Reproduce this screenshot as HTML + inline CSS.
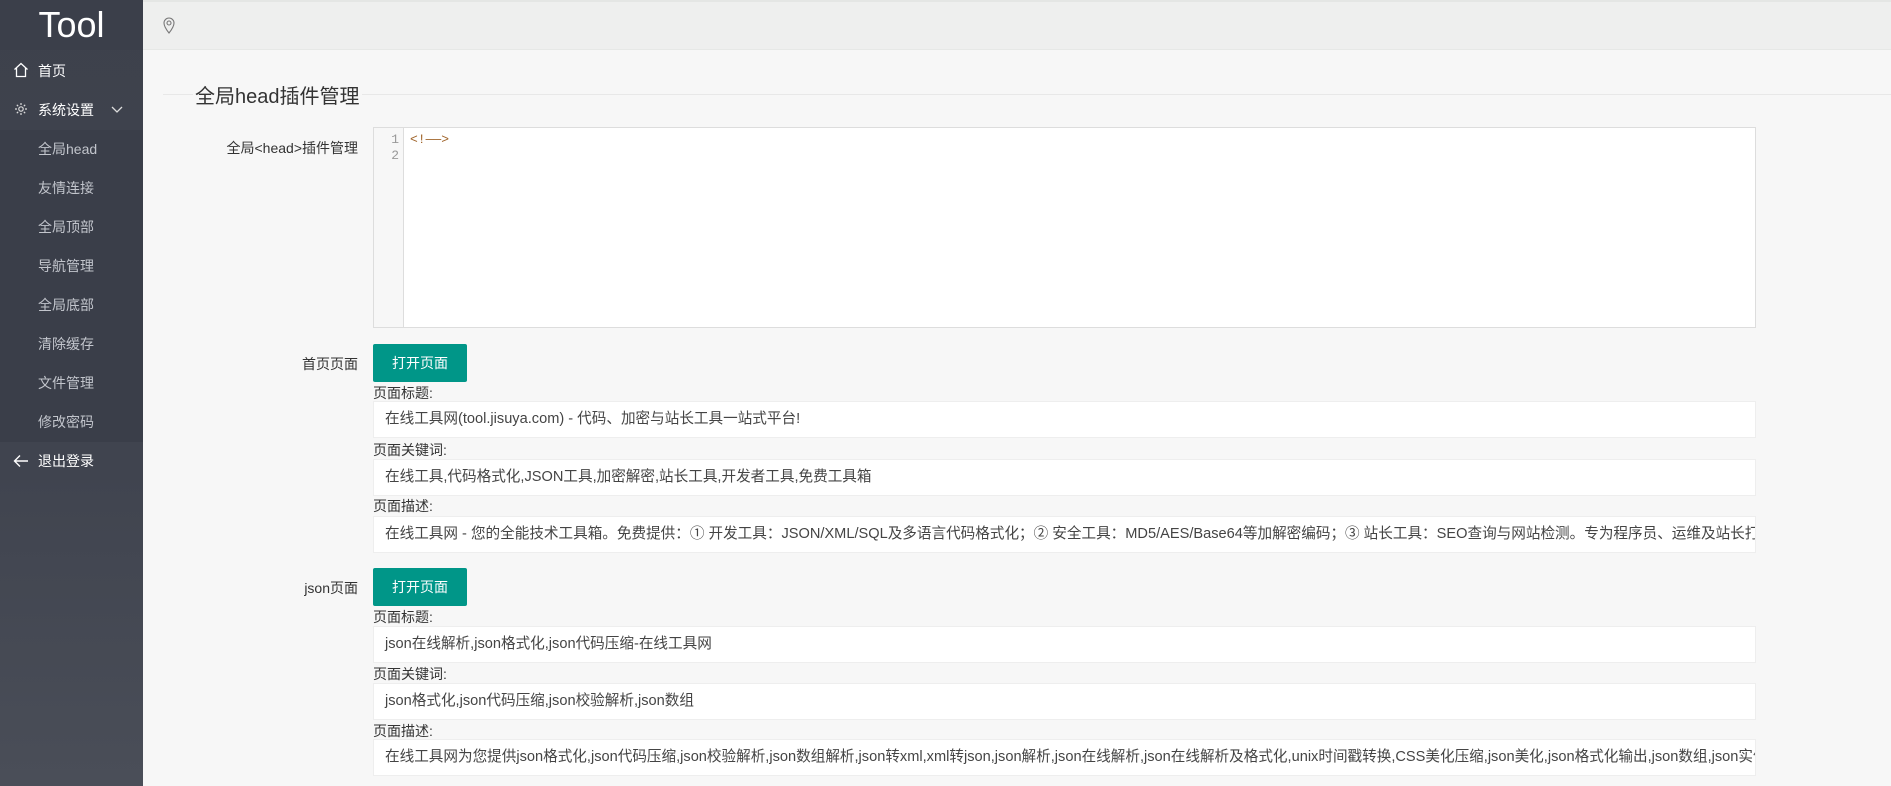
<!DOCTYPE html>
<html><head><meta charset="utf-8"><style>
*{margin:0;padding:0;box-sizing:border-box}
body{width:1891px;height:786px;overflow:hidden;background:#f7f7f7;font-family:"Liberation Sans","Noto Sans CJK SC",sans-serif;font-size:14px;color:#333;position:relative}
.side{position:absolute;left:0;top:0;width:143px;height:786px;background:linear-gradient(#3d414c,#40444f 60%,#4a4e58)}
.logo{position:absolute;left:0;top:0;width:143px;height:50px;text-align:center;color:#fff;font-size:36px;line-height:50px;background:#3b3f4a}
.sub{position:absolute;left:0;top:130px;width:143px;height:312px;background:#3a3e49}
.mi{position:absolute;left:38px;color:#fff;font-size:14px;line-height:20px}
.si{position:absolute;left:38px;color:#c2c5cc;font-size:14px;line-height:20px}
.hdr{position:absolute;left:143px;top:0;right:0;height:50px;background:#eeefee;border-top:2px solid #e4e6e4;border-bottom:1px solid #e6e8e6}
.title{position:absolute;left:193px;top:80px;font-size:20px;color:#333;background:#f7f7f7;padding:0 2px}
.line{position:absolute;left:163px;right:0;top:94px;height:1px;background:#e8e8e8}
.lbl{position:absolute;right:1533px;font-size:14px;color:#333;white-space:nowrap}
.cap{position:absolute;left:373px;font-size:14px;color:#333}
.inp{position:absolute;left:373px;width:1383px;height:37px;background:#fff;border:1px solid #eee;padding-left:11px;line-height:35px;font-size:14.6px;color:#444;white-space:nowrap;overflow:hidden}
.btn{position:absolute;left:373px;width:94px;height:38px;background:#009688;color:#fff;border-radius:2px;text-align:center;line-height:38px;font-size:14px}
.ed{position:absolute;left:373px;top:127px;width:1383px;height:201px;background:#fff;border:1px solid #ddd}
.gut{position:absolute;left:0;top:0;width:30px;height:199px;background:#f7f7f7;border-right:1px solid #ddd;font-family:"Liberation Mono",monospace;font-size:13px;color:#999;text-align:right;padding:4px 4px 0 0;line-height:16px}
</style></head><body>
<div class="side">
<div class="logo">Tool</div>
<div class="sub"></div>
<svg style="position:absolute;left:13px;top:62px" width="16" height="16" viewBox="0 0 16 16" fill="none" stroke="#fff" stroke-width="1.3"><path d="M1.5 7.5L8 1.5l6.5 6M3.5 6v8.5h9V6"/></svg>
<div class="mi" style="top:61px">首页</div>
<svg style="position:absolute;left:14px;top:102px" width="14" height="14" viewBox="0 0 14 14" fill="none" stroke="#ddd" stroke-width="1.2"><circle cx="7" cy="7" r="2.2"/><path d="M7 1v2M7 11v2M1 7h2M11 7h2M2.8 2.8l1.4 1.4M9.8 9.8l1.4 1.4M2.8 11.2l1.4-1.4M9.8 4.2l1.4-1.4"/></svg>
<div class="mi" style="top:100px">系统设置</div>
<svg style="position:absolute;left:111px;top:106px" width="12" height="8" viewBox="0 0 12 8" fill="none" stroke="#ddd" stroke-width="1.3"><path d="M1 1l5 5 5-5"/></svg>
<div class="si" style="top:139px">全局head</div>
<div class="si" style="top:178px">友情连接</div>
<div class="si" style="top:217px">全局顶部</div>
<div class="si" style="top:256px">导航管理</div>
<div class="si" style="top:295px">全局底部</div>
<div class="si" style="top:334px">清除缓存</div>
<div class="si" style="top:373px">文件管理</div>
<div class="si" style="top:412px">修改密码</div>
<svg style="position:absolute;left:13px;top:454px" width="16" height="14" viewBox="0 0 16 14" fill="none" stroke="#fff" stroke-width="1.4"><path d="M15 7H2M7 1.5L1.5 7 7 12.5"/></svg>
<div class="mi" style="top:451px">退出登录</div>
</div>
<div class="hdr"><svg style="position:absolute;left:20px;top:15px" width="12" height="17" viewBox="0 0 12 17" fill="none" stroke="#777" stroke-width="1.1"><path d="M6 16C2 11 1 8.5 1 6a5 5 0 0110 0c0 2.5-1 5-5 10z"/><circle cx="6" cy="6" r="2"/></svg></div>
<div class="line"></div>
<div class="title">全局head插件管理</div>
<div class="lbl" style="top:138px">全局&lt;head&gt;插件管理</div>
<div class="ed"><div class="gut">1<br>2</div><div style="position:absolute;left:36px;top:4px;font-family:'Liberation Mono',monospace;font-size:13px;color:#a0642a;line-height:16px">&lt;!——&gt;</div></div>
<div class="lbl" style="top:354px">首页页面</div>
<div class="btn" style="top:344px">打开页面</div>
<div class="cap" style="top:383px">页面标题:</div>
<div class="inp" style="top:401px">在线工具网(tool.jisuya.com) - 代码、加密与站长工具一站式平台!</div>
<div class="cap" style="top:440px">页面关键词:</div>
<div class="inp" style="top:459px">在线工具,代码格式化,JSON工具,加密解密,站长工具,开发者工具,免费工具箱</div>
<div class="cap" style="top:496px">页面描述:</div>
<div class="inp" style="top:516px">在线工具网 - 您的全能技术工具箱。免费提供：① 开发工具：JSON/XML/SQL及多语言代码格式化；② 安全工具：MD5/AES/Base64等加解密编码；③ 站长工具：SEO查询与网站检测。专为程序员、运维及站长打造，一站式解决</div>
<div class="lbl" style="top:578px">json页面</div>
<div class="btn" style="top:568px">打开页面</div>
<div class="cap" style="top:607px">页面标题:</div>
<div class="inp" style="top:626px">json在线解析,json格式化,json代码压缩-在线工具网</div>
<div class="cap" style="top:664px">页面关键词:</div>
<div class="inp" style="top:683px">json格式化,json代码压缩,json校验解析,json数组</div>
<div class="cap" style="top:721px">页面描述:</div>
<div class="inp" style="top:739px">在线工具网为您提供json格式化,json代码压缩,json校验解析,json数组解析,json转xml,xml转json,json解析,json在线解析,json在线解析及格式化,unix时间戳转换,CSS美化压缩,json美化,json格式化输出,json数组,json实体类,json转换</div>
</body></html>
